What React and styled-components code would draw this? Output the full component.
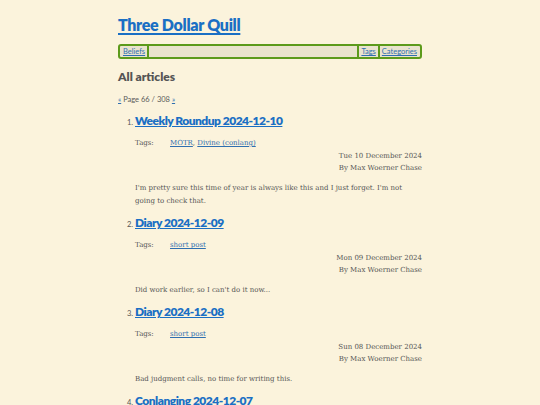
import styled, { createGlobalStyle } from 'styled-components';

const GlobalStyle = createGlobalStyle`
  html, body {
    margin: 0;
    padding: 0;
    background: #fbf3dc;
  }
  body {
    font-family: 'DejaVu Serif', serif;
    color: #555;
  }
`;

const Page = styled.div`
  width: 304px;
  margin: 0 auto;
  padding-top: 15px;
`;

const SiteTitle = styled.h1`
  margin: 0 0 9px;
  font-family: Lato, 'Open Sans', sans-serif;
  font-size: 16px;
  font-weight: 800;
  letter-spacing: -0.3px;
  line-height: 20px;

  a {
    color: #1a6fc4;
    text-decoration: underline;
    text-decoration-thickness: 2px;
    text-underline-offset: 2px;
  }
`;

const Nav = styled.nav`
  display: flex;
  align-items: stretch;
  height: 11px;
  border: 2px solid #5c9a1b;
  border-radius: 3px;
  background: #e9e3cd;
  padding: 0 1px;
`;

const NavItem = styled.a`
  font-family: Lato, 'Open Sans', sans-serif;
  font-size: 7.5px;
  line-height: 11px;
  color: #2f6fb0;
  text-decoration: underline;
  padding: 0 2px;
  border-left: ${p => (p.$left ? '2px solid #5c9a1b' : '0')};
  border-right: ${p => (p.$right ? '2px solid #5c9a1b' : '0')};
`;

const Spacer = styled.div`
  flex: 1;
`;

const SectionTitle = styled.h2`
  margin: 10px 0 0;
  font-family: Lato, 'Open Sans', sans-serif;
  font-size: 12px;
  font-weight: 800;
  line-height: 16px;
  color: #555;
`;

const Pager = styled.p`
  margin: 10px 0 0;
  font-family: Lato, 'Open Sans', sans-serif;
  font-size: 7.5px;
  line-height: 10px;
  color: #5a5a5a;

  a {
    color: #2f6fb0;
  }
`;

const Articles = styled.ol`
  margin: 8px 0 0;
  padding-left: 17px;
  font-family: Lato, 'Open Sans', sans-serif;

  li::marker {
    font-size: 7.5px;
    color: #555;
  }
`;

const Article = styled.li`
  margin-bottom: 7px;
`;

const ArticleTitle = styled.h3`
  margin: 0;
  font-size: 12px;
  font-weight: 800;
  letter-spacing: -0.5px;
  line-height: 16px;

  a {
    color: #1a6fc4;
    text-decoration: underline;
    text-underline-offset: 1px;
  }
`;

const TagRow = styled.div`
  display: flex;
  margin-top: 9px;
  font-family: 'DejaVu Serif', serif;
  font-size: 7px;
  line-height: 11px;
  color: #555;
`;

const TagLabel = styled.span`
  width: 35px;
`;

const TagLink = styled.a`
  color: #2f6fb0;
  text-decoration: underline;
`;

const Meta = styled.div`
  margin-top: 1px;
  text-align: right;
  font-family: 'DejaVu Serif', serif;
  font-size: 7px;
  color: #555;
`;

const MetaLine = styled.div`
  height: 12px;
  line-height: 12px;
`;

const Summary = styled.p`
  margin: 8px 0 0;
  font-family: 'DejaVu Serif', serif;
  font-size: 7px;
  line-height: 13px;
  color: #555;
`;

const articles = [
  {
    title: 'Weekly Roundup 2024-12-10',
    tags: ['MOTR', 'Divine (conlang)'],
    date: 'Tue 10 December 2024',
    summary: "I'm pretty sure this time of year is always like this and I just forget. I'm not going to check that.",
  },
  {
    title: 'Diary 2024-12-09',
    tags: ['short post'],
    date: 'Mon 09 December 2024',
    summary: "Did work earlier, so I can't do it now...",
  },
  {
    title: 'Diary 2024-12-08',
    tags: ['short post'],
    date: 'Sun 08 December 2024',
    summary: 'Bad judgment calls, no time for writing this.',
  },
  {
    title: 'Conlanging 2024-12-07',
    tags: ['conlang'],
    date: 'Sat 07 December 2024',
    summary: '',
  },
];

const App = () => (
  <>
    <GlobalStyle />
    <Page>
      <SiteTitle>
        <a href="#">Three Dollar Quill</a>
      </SiteTitle>
      <Nav>
        <NavItem href="#" $right>Beliefs</NavItem>
        <Spacer />
        <NavItem href="#" $left>Tags</NavItem>
        <NavItem href="#" $left>Categories</NavItem>
      </Nav>
      <SectionTitle>All articles</SectionTitle>
      <Pager>
        <a href="#">«</a> Page 66 / 308 <a href="#">»</a>
      </Pager>
      <Articles>
        {articles.map(a => (
          <Article key={a.title}>
            <ArticleTitle>
              <a href="#">{a.title}</a>
            </ArticleTitle>
            <TagRow>
              <TagLabel>Tags:</TagLabel>
              <span>
                {a.tags.map((t, i) => (
                  <span key={t}>
                    {i > 0 && ', '}
                    <TagLink href="#">{t}</TagLink>
                  </span>
                ))}
              </span>
            </TagRow>
            <Meta>
              <MetaLine>{a.date}</MetaLine>
              <MetaLine>By Max Woerner Chase</MetaLine>
            </Meta>
            {a.summary && <Summary>{a.summary}</Summary>}
          </Article>
        ))}
      </Articles>
    </Page>
  </>
);

export default App;
